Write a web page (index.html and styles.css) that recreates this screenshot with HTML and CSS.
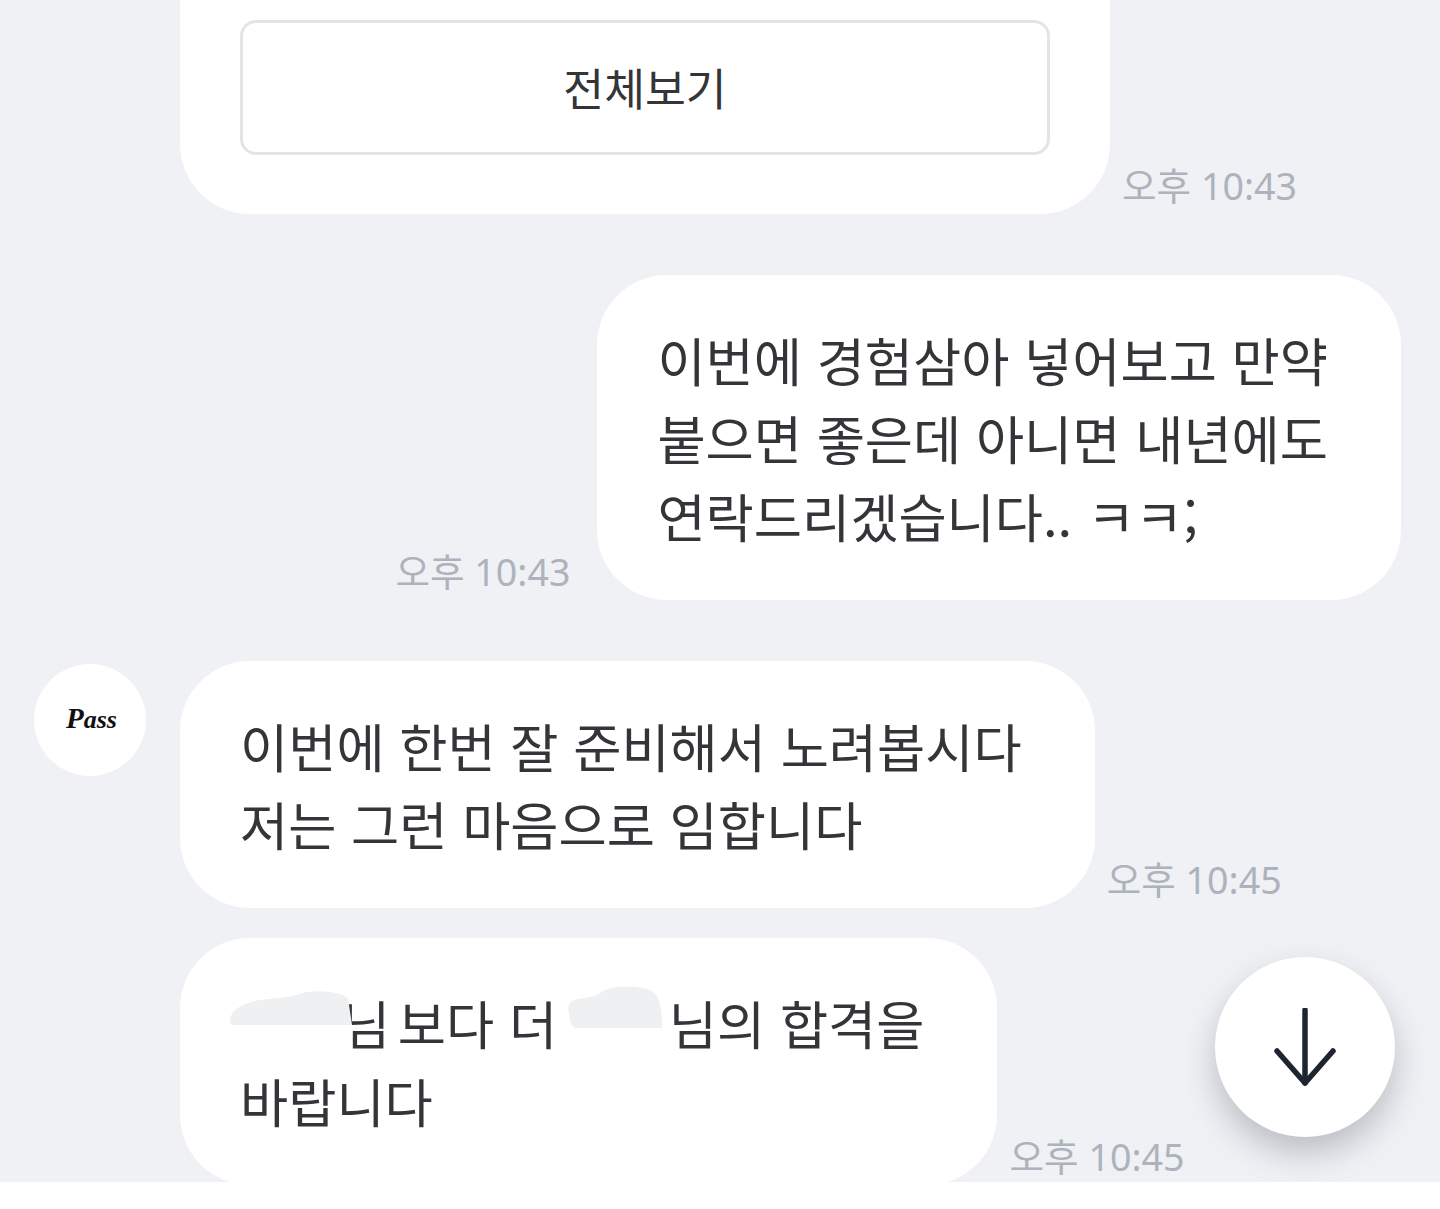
FILE: index.html
```html
<!DOCTYPE html>
<html lang="ko">
<head>
    <meta charset="UTF-8">
    <meta name="viewport" content="width=device-width, initial-scale=1.0">
    <title>채팅</title>
    <link rel="stylesheet" href="styles.css">
</head>
<body>
    <div class="chat">
        <div class="row">
            <div class="bubble bubble-first">
                <button class="view-all" type="button">전체보기</button>
            </div>
            <span class="time">오후 10:43</span>
        </div>

        <div class="row row-mine">
            <span class="time">오후 10:43</span>
            <div class="bubble">이번에 경험삼아 넣어보고 만약<br>붙으면 좋은데 아니면 내년에도<br>연락드리겠습니다.. ㅋㅋ;</div>
        </div>

        <div class="row row-avatar">
            <div class="avatar">Pass</div>
            <div class="bubble">이번에 한번 잘 준비해서 노려봅시다<br>저는 그런 마음으로 임합니다</div>
            <span class="time">오후 10:45</span>
        </div>

        <div class="row row-next">
            <div class="bubble"><span class="redact redact-a"><svg class="blob" width="122" height="60" viewBox="0 0 122 60"><path fill="#eff0f2" d="M0 28C2 18 14 12 30 9C50 7 62 6 76 1C92-1 110 1 118 7L122 34H3C0 34 0 31 0 28Z"/></svg></span><span class="name-end">님</span> 보다 더 <span class="redact redact-b"><svg class="blob" width="96" height="68" viewBox="0 0 96 68"><path fill="#eff0f2" d="M2 28C0 20 2 15 10 13C22 12 30 10 38 4C50-1 76-1 86 6C94 12 95 28 95 42H8C4 40 3 34 2 28Z"/></svg></span>님의 합격을<br>바랍니다</div>
            <span class="time">오후 10:45</span>
        </div>

        <button class="scroll-down" type="button" aria-label="아래로">
            <svg width="64" height="78" viewBox="0 0 64 78" fill="none" stroke="#1f2530" stroke-width="5.5" stroke-linecap="round" stroke-linejoin="round">
                <path d="M32 2V75"/>
                <path d="M4 43L32 75L60 43"/>
            </svg>
        </button>
    </div>
    <div class="bottom-bar"></div>
</body>
</html>
```

FILE: styles.css
```css
html, body {
    margin: 0;
    padding: 0;
    height: 1209px;
    overflow: hidden;
    background-color: #fff;
}
body {
    font-family: "Noto Sans CJK KR", "Noto Sans", sans-serif;
    color: #333538;
}
.chat {
    position: relative;
    height: 1182px;
    overflow: hidden;
    background-color: #eff1f5;
}
.row {
    display: flex;
    align-items: flex-end;
    gap: 12px;
    padding-left: 180px;
    margin-bottom: 61px;
}
.row-mine {
    justify-content: flex-end;
    gap: 27px;
    padding-left: 0;
    padding-right: 39px;
}
.row-avatar {
    padding-left: 34px;
    margin-bottom: 30px;
}
.row-next {
    margin-bottom: 0;
}
.bubble {
    background-color: #fff;
    border-radius: 70px;
    padding: 45px 73px 46px 60px;
    font-size: 52.4px;
    font-weight: 400;
    line-height: 78px;
    white-space: nowrap;
}
.bubble-first {
    width: 810px;
    padding: 20px 60px 59px;
    border-radius: 0 0 70px 70px;
}
.view-all {
    display: block;
    box-sizing: border-box;
    width: 810px;
    height: 135px;
    padding: 0 0 2px;
    background-color: #fff;
    border: 3px solid #e3e4e6;
    border-radius: 16px;
    font-family: inherit;
    font-size: 44.4px;
    font-weight: 400;
    color: #333538;
}
.time {
    font-family: "Noto Sans", "Noto Sans CJK KR", sans-serif;
    font-size: 37.6px;
    font-weight: 400;
    line-height: 46px;
    color: #adb3bc;
    margin-bottom: 5px;
    white-space: nowrap;
}
.avatar {
    flex: none;
    align-self: flex-start;
    box-sizing: border-box;
    width: 112px;
    height: 112px;
    margin: 3px 22px 0 0;
    padding-left: 3px;
    border-radius: 50%;
    background-color: #fff;
    font-family: "Liberation Serif", serif;
    font-size: 26px;
    font-style: italic;
    font-weight: 700;
    line-height: 108px;
    text-align: center;
    color: #111;
}
.avatar::first-letter {
    font-size: 29px;
}
.redact {
    position: relative;
    display: inline-block;
    height: 1px;
}
.redact-a {
    width: 102px;
}
.redact-b {
    width: 97px;
}
.name-end {
    letter-spacing: -7px;
}
.blob {
    position: absolute;
    display: block;
}
.redact-a .blob {
    left: -10px;
    bottom: -6px;
}
.redact-b .blob {
    left: -5px;
    bottom: -9px;
}
.scroll-down {
    position: absolute;
    left: 1215px;
    top: 957px;
    display: flex;
    align-items: center;
    justify-content: center;
    width: 180px;
    height: 180px;
    padding: 0;
    border: none;
    border-radius: 50%;
    background-color: #fff;
    box-shadow: 0 16px 32px rgba(40, 45, 55, 0.26);
}
.bottom-bar {
    height: 27px;
    background-color: #fff;
}
```
